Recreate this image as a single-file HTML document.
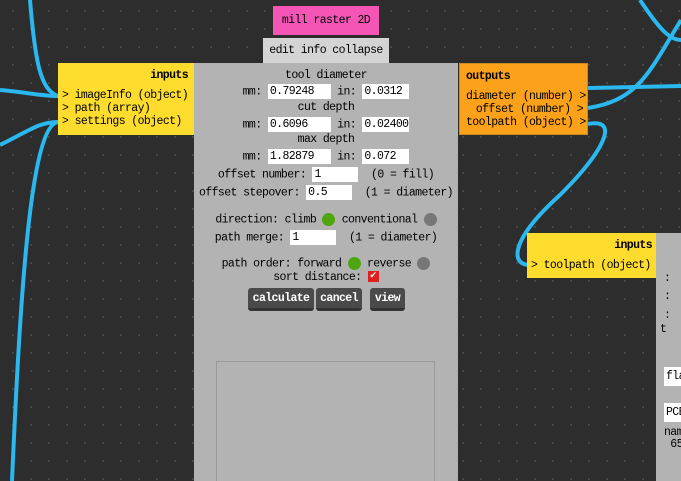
<!DOCTYPE html>
<html><head><style>
*{margin:0;padding:0;box-sizing:border-box}
body{width:681px;height:481px;overflow:hidden;background-color:#2d2d2d;background-image:radial-gradient(circle,#4a4a4a 1px,transparent 1.2px);background-size:18px 18px;background-position:4px 2px;font-family:"Liberation Mono",monospace;font-size:11.5px;letter-spacing:-0.6px;color:#000;position:relative;white-space:nowrap}
.a{position:absolute}
.row{position:absolute;left:194px;width:264px;text-align:center;white-space:pre;line-height:14px}
.in{display:inline-block;background:#fff;height:15px;line-height:15px;text-align:left;padding-left:2px;vertical-align:middle}
.dot{display:inline-block;width:13px;height:13px;border-radius:50%;vertical-align:middle}
.btn{position:absolute;top:288px;height:23px;background:#4a4a4a;color:#fff;font-weight:bold;line-height:21px;text-align:center;border-radius:3px;border-bottom:3px solid #333}
</style></head><body>
<svg class="a" style="left:0;top:0" width="681" height="481">
<g fill="none" stroke="#2bb8ee" stroke-width="4">
<path d="M30 0 C35 60 40 90 58 96"/>
<path d="M0 90 C25 92 40 96 58 96"/>
<path d="M0 145 C30 130 40 122 58 122"/>
<path d="M12 481 C20 300 30 125 58 122"/>
<path d="M588 88 L681 86"/>
<path d="M588 108 C640 100 650 70 681 20"/>
<path d="M588 124 C620 118 605 150 560 195 C510 240 510 265 530 265"/>
<path d="M640 0 C660 30 670 40 681 40"/>
</g></svg>
<div class="a" style="left:273px;top:6px;width:106px;height:29px;background:#f556b6;text-align:center;line-height:29px">mill raster 2D</div>
<div class="a" style="left:263px;top:38px;width:126px;height:25px;background:#d4d4d4;text-align:center;line-height:25px">edit info collapse</div>
<div class="a" style="left:194px;top:63px;width:264px;height:418px;background:#b3b3b3"></div>
<div class="a" style="left:58px;top:63px;width:136px;height:72px;background:#fddc2e;line-height:13px;padding:6px 6px 0 4px">
<div style="text-align:right;font-weight:bold;margin-bottom:7px">inputs</div>
<div>&gt; imageInfo (object)</div><div>&gt; path (array)</div><div>&gt; settings (object)</div></div>
<div class="a" style="left:459px;top:63px;width:129px;height:72px;background:#fba21a;line-height:13px;padding:6px 4px 0 6px;border:1px solid #c98a20">
<div style="font-weight:bold;margin-bottom:7px">outputs</div>
<div style="text-align:right">diameter (number) &gt;</div><div style="text-align:right">offset (number) &gt;</div><div>toolpath (object) &gt;</div></div>
<div class="a" style="left:656px;top:233px;width:25px;height:248px;background:#b3b3b3;line-height:14px">
<div style="position:absolute;top:39px;left:8px">:</div><div style="position:absolute;top:57px;left:8px">:</div><div style="position:absolute;top:76px;left:8px">:</div><div style="position:absolute;top:90px;left:4px">t</div>
<div style="position:absolute;top:134px;left:8px;background:#fff;width:20px;height:19px;line-height:19px;padding-left:2px;overflow:hidden">fla</div>
<div style="position:absolute;top:170px;left:8px;background:#fff;width:20px;height:19px;line-height:19px;padding-left:2px;overflow:hidden">PCB</div>
<div style="position:absolute;top:194px;left:8px;line-height:12px">nam<br>&nbsp;65</div></div>
<div class="a" style="left:527px;top:233px;width:129px;height:45px;background:#fddc2e;line-height:13px;padding:6px 4px 0 4px">
<div style="text-align:right;font-weight:bold;margin-bottom:7px">inputs</div>
<div>&gt; toolpath (object)</div></div>
<div class="row" style="top:69px">tool diameter</div>
<div class="row" style="top:84px">mm: <span class="in" style="width:63px">0.79248</span> in: <span class="in" style="width:47px">0.0312</span></div>
<div class="row" style="top:101px">cut depth</div>
<div class="row" style="top:117px">mm: <span class="in" style="width:63px">0.6096</span> in: <span class="in" style="width:47px">0.02400</span></div>
<div class="row" style="top:133px">max depth</div>
<div class="row" style="top:149px">mm: <span class="in" style="width:63px">1.82879</span> in: <span class="in" style="width:47px">0.072</span></div>
<div class="row" style="top:167px">offset number: <span class="in" style="width:46px">1</span>  (0 = fill)</div>
<div class="row" style="top:185px">offset stepover: <span class="in" style="width:46px">0.5</span>  (1 = diameter)</div>
<div class="row" style="top:213px">direction: climb <span class="dot" style="background:#4ea60e"></span> conventional <span class="dot" style="background:#777"></span></div>
<div class="row" style="top:230px">path merge: <span class="in" style="width:46px">1</span>  (1 = diameter)</div>
<div class="row" style="top:257px">path order: forward <span class="dot" style="background:#4ea60e"></span> reverse <span class="dot" style="background:#777"></span></div>
<div class="row" style="top:271px">sort distance: <span style="display:inline-block;width:11px;height:11px;background:#e02020;color:#fff;font-size:9px;line-height:11px;text-align:center;vertical-align:middle;letter-spacing:0">✔</span></div>
<div class="btn" style="left:248px;width:66px">calculate</div>
<div class="btn" style="left:316px;width:46px">cancel</div>
<div class="btn" style="left:370px;width:35px">view</div>
<div class="a" style="left:216px;top:361px;width:219px;height:120px;border:1px solid #999;border-bottom:none"></div>
</body></html>
